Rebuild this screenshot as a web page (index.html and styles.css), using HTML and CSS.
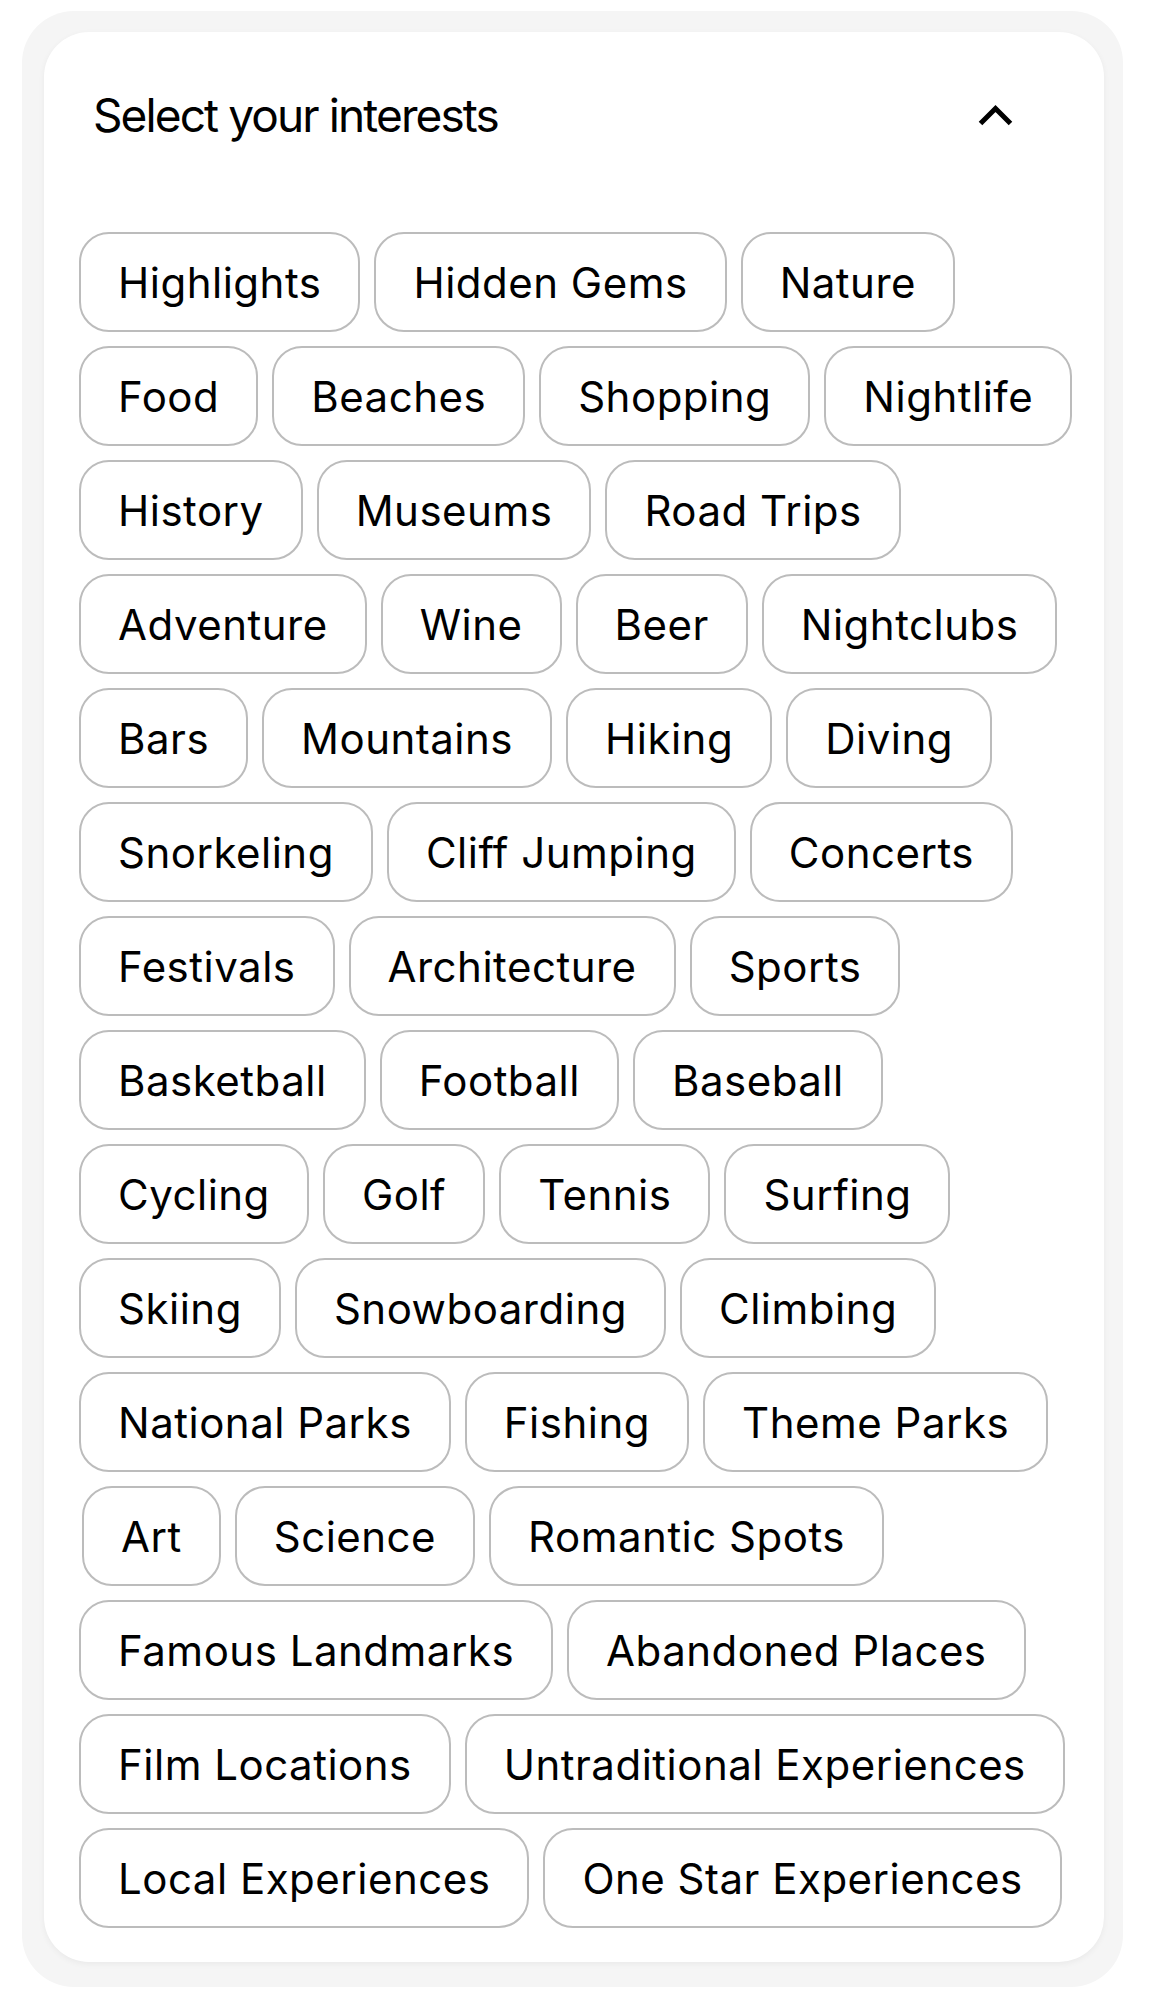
FILE: index.html
```html
<!DOCTYPE html>
<html lang="en">
<head>
<meta charset="utf-8">
<title>Select your interests</title>
<link rel="stylesheet" href="styles.css">
</head>
<body>
<div class="frame">
  <section class="card">
    <header class="card-header">
      <h2 class="card-title">Select your interests</h2>
      <svg class="chevron" width="35" height="22" viewBox="0 0 35 22" aria-hidden="true">
        <path d="M2.5 19.5 L17.5 4.5 L32.5 19.5" fill="none" stroke="#000" stroke-width="5" stroke-linejoin="miter"/>
      </svg>
    </header>
    <div class="chips">
      <button class="chip">Highlights</button>
      <button class="chip">Hidden Gems</button>
      <button class="chip">Nature</button>
      <button class="chip">Food</button>
      <button class="chip">Beaches</button>
      <button class="chip">Shopping</button>
      <button class="chip">Nightlife</button>
      <button class="chip">History</button>
      <button class="chip">Museums</button>
      <button class="chip">Road Trips</button>
      <button class="chip">Adventure</button>
      <button class="chip">Wine</button>
      <button class="chip">Beer</button>
      <button class="chip">Nightclubs</button>
      <button class="chip">Bars</button>
      <button class="chip">Mountains</button>
      <button class="chip">Hiking</button>
      <button class="chip">Diving</button>
      <button class="chip">Snorkeling</button>
      <button class="chip">Cliff Jumping</button>
      <button class="chip">Concerts</button>
      <button class="chip">Festivals</button>
      <button class="chip">Architecture</button>
      <button class="chip">Sports</button>
      <button class="chip">Basketball</button>
      <button class="chip">Football</button>
      <button class="chip">Baseball</button>
      <button class="chip">Cycling</button>
      <button class="chip">Golf</button>
      <button class="chip">Tennis</button>
      <button class="chip">Surfing</button>
      <button class="chip">Skiing</button>
      <button class="chip">Snowboarding</button>
      <button class="chip">Climbing</button>
      <button class="chip">National Parks</button>
      <button class="chip">Fishing</button>
      <button class="chip">Theme Parks</button>
      <button class="chip chip-art">Art</button>
      <button class="chip">Science</button>
      <button class="chip">Romantic Spots</button>
      <button class="chip">Famous Landmarks</button>
      <button class="chip">Abandoned Places</button>
      <button class="chip">Film Locations</button>
      <button class="chip">Untraditional Experiences</button>
      <button class="chip">Local Experiences</button>
      <button class="chip">One Star Experiences</button>
    </div>
  </section>
</div>
</body>
</html>
```

FILE: styles.css
```css
* {
  box-sizing: border-box;
}

html, body {
  margin: 0;
  padding: 0;
  background: #ffffff;
}

body {
  font-family: Inter, "Liberation Sans", Arial, sans-serif;
  color: #000;
}

.frame {
  margin: 11px 27px 12px 22px;
  padding: 21px 19px 25px 22px;
  background: #f5f5f5;
  border-radius: 52px;
}

.card {
  background: #ffffff;
  border-radius: 45px;
  box-shadow: 0 2px 6px rgba(0, 0, 0, 0.05);
  padding-bottom: 34px;
}

.card-header {
  display: flex;
  align-items: center;
  justify-content: space-between;
  padding: 55px 91px 0 49px;
  height: 111px;
}

.card-title {
  margin: 0;
  font-size: 46px;
  font-weight: 400;
  line-height: 56px;
  letter-spacing: -1.9px;
}

.chevron {
  display: block;
  flex: none;
}

.chips {
  display: flex;
  flex-wrap: wrap;
  gap: 14px;
  margin-top: 89px;
  padding: 0 6px 0 35px;
}

.chip {
  display: flex;
  align-items: center;
  justify-content: center;
  height: 100px;
  padding: 0 37px;
  border: 2px solid #bcbcbc;
  border-radius: 30px;
  background: #ffffff;
  font-family: Inter, "Liberation Sans", Arial, sans-serif;
  font-size: 42px;
  font-weight: 400;
  color: #000;
  letter-spacing: 0.5px;
  white-space: nowrap;
  cursor: pointer;
}

.chip-art {
  margin-left: 3px;
}
```
